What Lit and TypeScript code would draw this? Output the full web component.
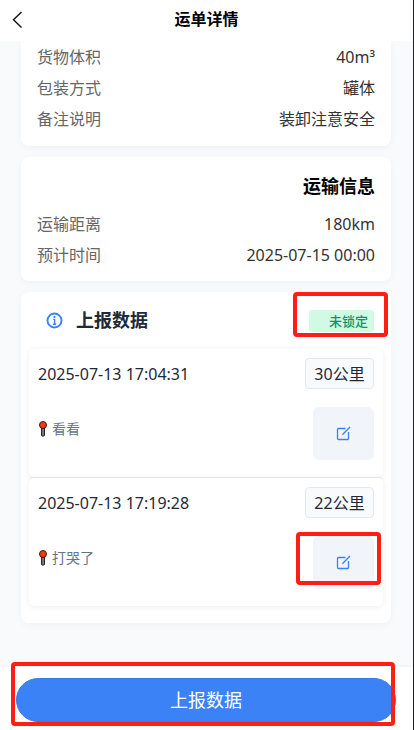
import { LitElement, html, css, nothing } from "lit";
import { customElement } from "lit/decorators.js";

interface Report {
  time: string;
  distance: string;
  place: string;
  marked: boolean;
}

const cargo: [string, string][] = [
  ["货物体积", "40m³"],
  ["包装方式", "罐体"],
  ["备注说明", "装卸注意安全"],
];

const transport: [string, string][] = [
  ["运输距离", "180km"],
  ["预计时间", "2025-07-15 00:00"],
];

const reports: Report[] = [
  { time: "2025-07-13 17:04:31", distance: "30公里", place: "看看", marked: false },
  { time: "2025-07-13 17:19:28", distance: "22公里", place: "打哭了", marked: true },
];

@customElement("app-root")
export class AppRoot extends LitElement {
  static styles = css`
    :host {
      display: flex;
      flex-direction: column;
      min-height: 100vh;
      box-sizing: border-box;
      border-right: 1px solid #1d1f26;
      background: #f8fafc;
      color: #333;
      font-family: "Noto Sans", "Noto Sans CJK SC", sans-serif;
      font-size: 16px;
      line-height: 31px;
    }
    * {
      box-sizing: border-box;
    }
    button {
      font: inherit;
      margin: 0;
      padding: 0;
      border: 0;
      cursor: pointer;
    }
    h1,
    h2,
    dl,
    dd,
    ul {
      margin: 0;
      padding: 0;
    }
    svg {
      display: block;
      flex: none;
    }
    .bar {
      position: sticky;
      top: 0;
      z-index: 2;
      display: grid;
      grid-template-columns: 40px 1fr 40px;
      align-items: start;
      height: 41px;
      background: #fff;
    }
    .back {
      display: flex;
      align-items: center;
      height: 40px;
      padding-left: 12px;
      background: none;
    }
    .title {
      text-align: center;
      color: #000;
      font-size: 16px;
      font-weight: 700;
      line-height: 38px;
    }
    .content {
      display: flex;
      flex-direction: column;
      gap: 11px;
      padding: 0 22px 40px 21px;
    }
    .card {
      padding: 11px 16px 10px;
      border-radius: 8px;
      background: #fff;
      box-shadow: 0 2px 8px rgba(0, 0, 0, 0.04);
    }
    .card.cut {
      padding-top: 1px;
      padding-bottom: 11px;
      border-radius: 0 0 8px 8px;
    }
    .card.list {
      padding: 0 8px 17px;
    }
    .row {
      display: flex;
      justify-content: space-between;
    }
    .label {
      color: #666;
    }
    .section {
      color: #000;
      font-size: 18px;
      font-weight: 700;
      line-height: 36px;
      text-align: right;
      padding-bottom: 5px;
    }
    .head {
      display: flex;
      align-items: center;
      height: 57px;
      padding: 0 9px 0 17px;
      gap: 13px;
    }
    .head h2 {
      flex: 1;
      color: #1f2937;
      font-size: 18px;
      font-weight: 700;
      line-height: 33px;
    }
    .tag {
      position: relative;
      width: 65px;
      padding-right: 6px;
      border-radius: 3px;
      background: #d1fae5;
      color: #059669;
      font-size: 13px;
      font-weight: 500;
      line-height: 22px;
      text-align: right;
    }
    .mark {
      position: absolute;
      border: 4px solid #ff1e12;
      border-radius: 4px;
      pointer-events: none;
    }
    .tag .mark {
      inset: -18px -14px -5px -16px;
    }
    .edit .mark {
      inset: -4px -7px 4px -17px;
    }
    .submit .mark {
      inset: -17px 0 -5px -6px;
    }
    .items {
      list-style: none;
    }
    .item {
      display: flex;
      flex-direction: column;
      gap: 18px;
      padding: 9px 9px 17px;
      border-radius: 5px;
      background: #fff;
      box-shadow: 0 1px 6px rgba(0, 0, 0, 0.07);
      color: #1f2937;
    }
    .item + .item {
      border-top: 1px solid #e2e4e7;
    }
    .time {
      line-height: 33px;
      height: 31px;
    }
    .distance {
      width: 69px;
      height: 31px;
      border: 1px solid #e2e8f0;
      border-radius: 4px;
      background: #f8fafc;
      text-align: center;
    }
    .place {
      display: flex;
      align-items: center;
      gap: 4px;
      height: 43px;
      color: #64748b;
      font-size: 14px;
    }
    .edit {
      position: relative;
      display: flex;
      align-items: center;
      justify-content: center;
      width: 61px;
      height: 53px;
      border-radius: 6px;
      background: #f1f5f9;
    }
    .foot {
      position: sticky;
      bottom: 0;
      margin-top: auto;
      padding: 11px 17px 8px 16px;
      background: #fff;
      box-shadow: 0 -1px 4px rgba(0, 0, 0, 0.04);
    }
    .submit {
      position: relative;
      width: 100%;
      height: 44px;
      border: 1px solid #3879e2;
      border-radius: 22px;
      background: #3b82f6;
      color: #fff;
      font-size: 18px;
    }
  `;

  private rows(data: [string, string][]) {
    return html`<dl>
      ${data.map(
        ([label, value]) => html`<div class="row">
          <dt class="label">${label}</dt>
          <dd>${value}</dd>
        </div>`
      )}
    </dl>`;
  }

  private report(r: Report) {
    return html`<li class="item">
      <div class="row">
        <span class="time">${r.time}</span>
        <span class="distance">${r.distance}</span>
      </div>
      <div class="row">
        <span class="place">
          <svg width="10" height="16" viewBox="0 0 10 16" aria-hidden="true">
            <path d="M3.5 7h3v7.5q-1.5 1.5-3 0z" fill="#777" stroke="#222" stroke-width="1" />
            <circle cx="5" cy="4" r="3.5" fill="#f03a17" stroke="#3a1a14" stroke-width="1" />
          </svg>
          ${r.place}
        </span>
        <button class="edit" type="button" aria-label="编辑">
          <svg width="15" height="15" viewBox="0 0 15 15" fill="none" stroke="#3b82f6" stroke-width="1.3">
            <path d="M9.5 2.5H2.5Q1.5 2.5 1.5 3.5V12.5Q1.5 13.5 2.5 13.5H11.5Q12.5 13.5 12.5 12.5V6" />
            <path d="M6.4 8.8L14 1" />
          </svg>
          ${r.marked ? html`<span class="mark"></span>` : nothing}
        </button>
      </div>
    </li>`;
  }

  render() {
    return html`
      <header class="bar">
        <button class="back" type="button" aria-label="返回">
          <svg width="11" height="18" viewBox="0 0 11 18" fill="none" stroke="#111" stroke-width="1.4">
            <path d="M9.5 1L1.5 8.8L9.5 16.5" />
          </svg>
        </button>
        <h1 class="title">运单详情</h1>
      </header>
      <main class="content">
        <section class="card cut">${this.rows(cargo)}</section>
        <section class="card">
          <h2 class="section">运输信息</h2>
          ${this.rows(transport)}
        </section>
        <section class="card list">
          <div class="head">
            <svg width="17" height="17" viewBox="0 0 17 17" aria-hidden="true">
              <circle cx="8.5" cy="8.5" r="7" fill="none" stroke="#3b82f6" stroke-width="1.9" />
              <circle cx="8.5" cy="4.9" r="1.1" fill="#3b82f6" />
              <path d="M7.2 7.4H8.6V12M7 12.2H10.2" fill="none" stroke="#3b82f6" stroke-width="1.4" />
            </svg>
            <h2>上报数据</h2>
            <span class="tag">未锁定<span class="mark"></span></span>
          </div>
          <ul class="items">
            ${reports.map((r) => this.report(r))}
          </ul>
        </section>
      </main>
      <footer class="foot">
        <button class="submit" type="button">上报数据<span class="mark"></span></button>
      </footer>
    `;
  }
}
